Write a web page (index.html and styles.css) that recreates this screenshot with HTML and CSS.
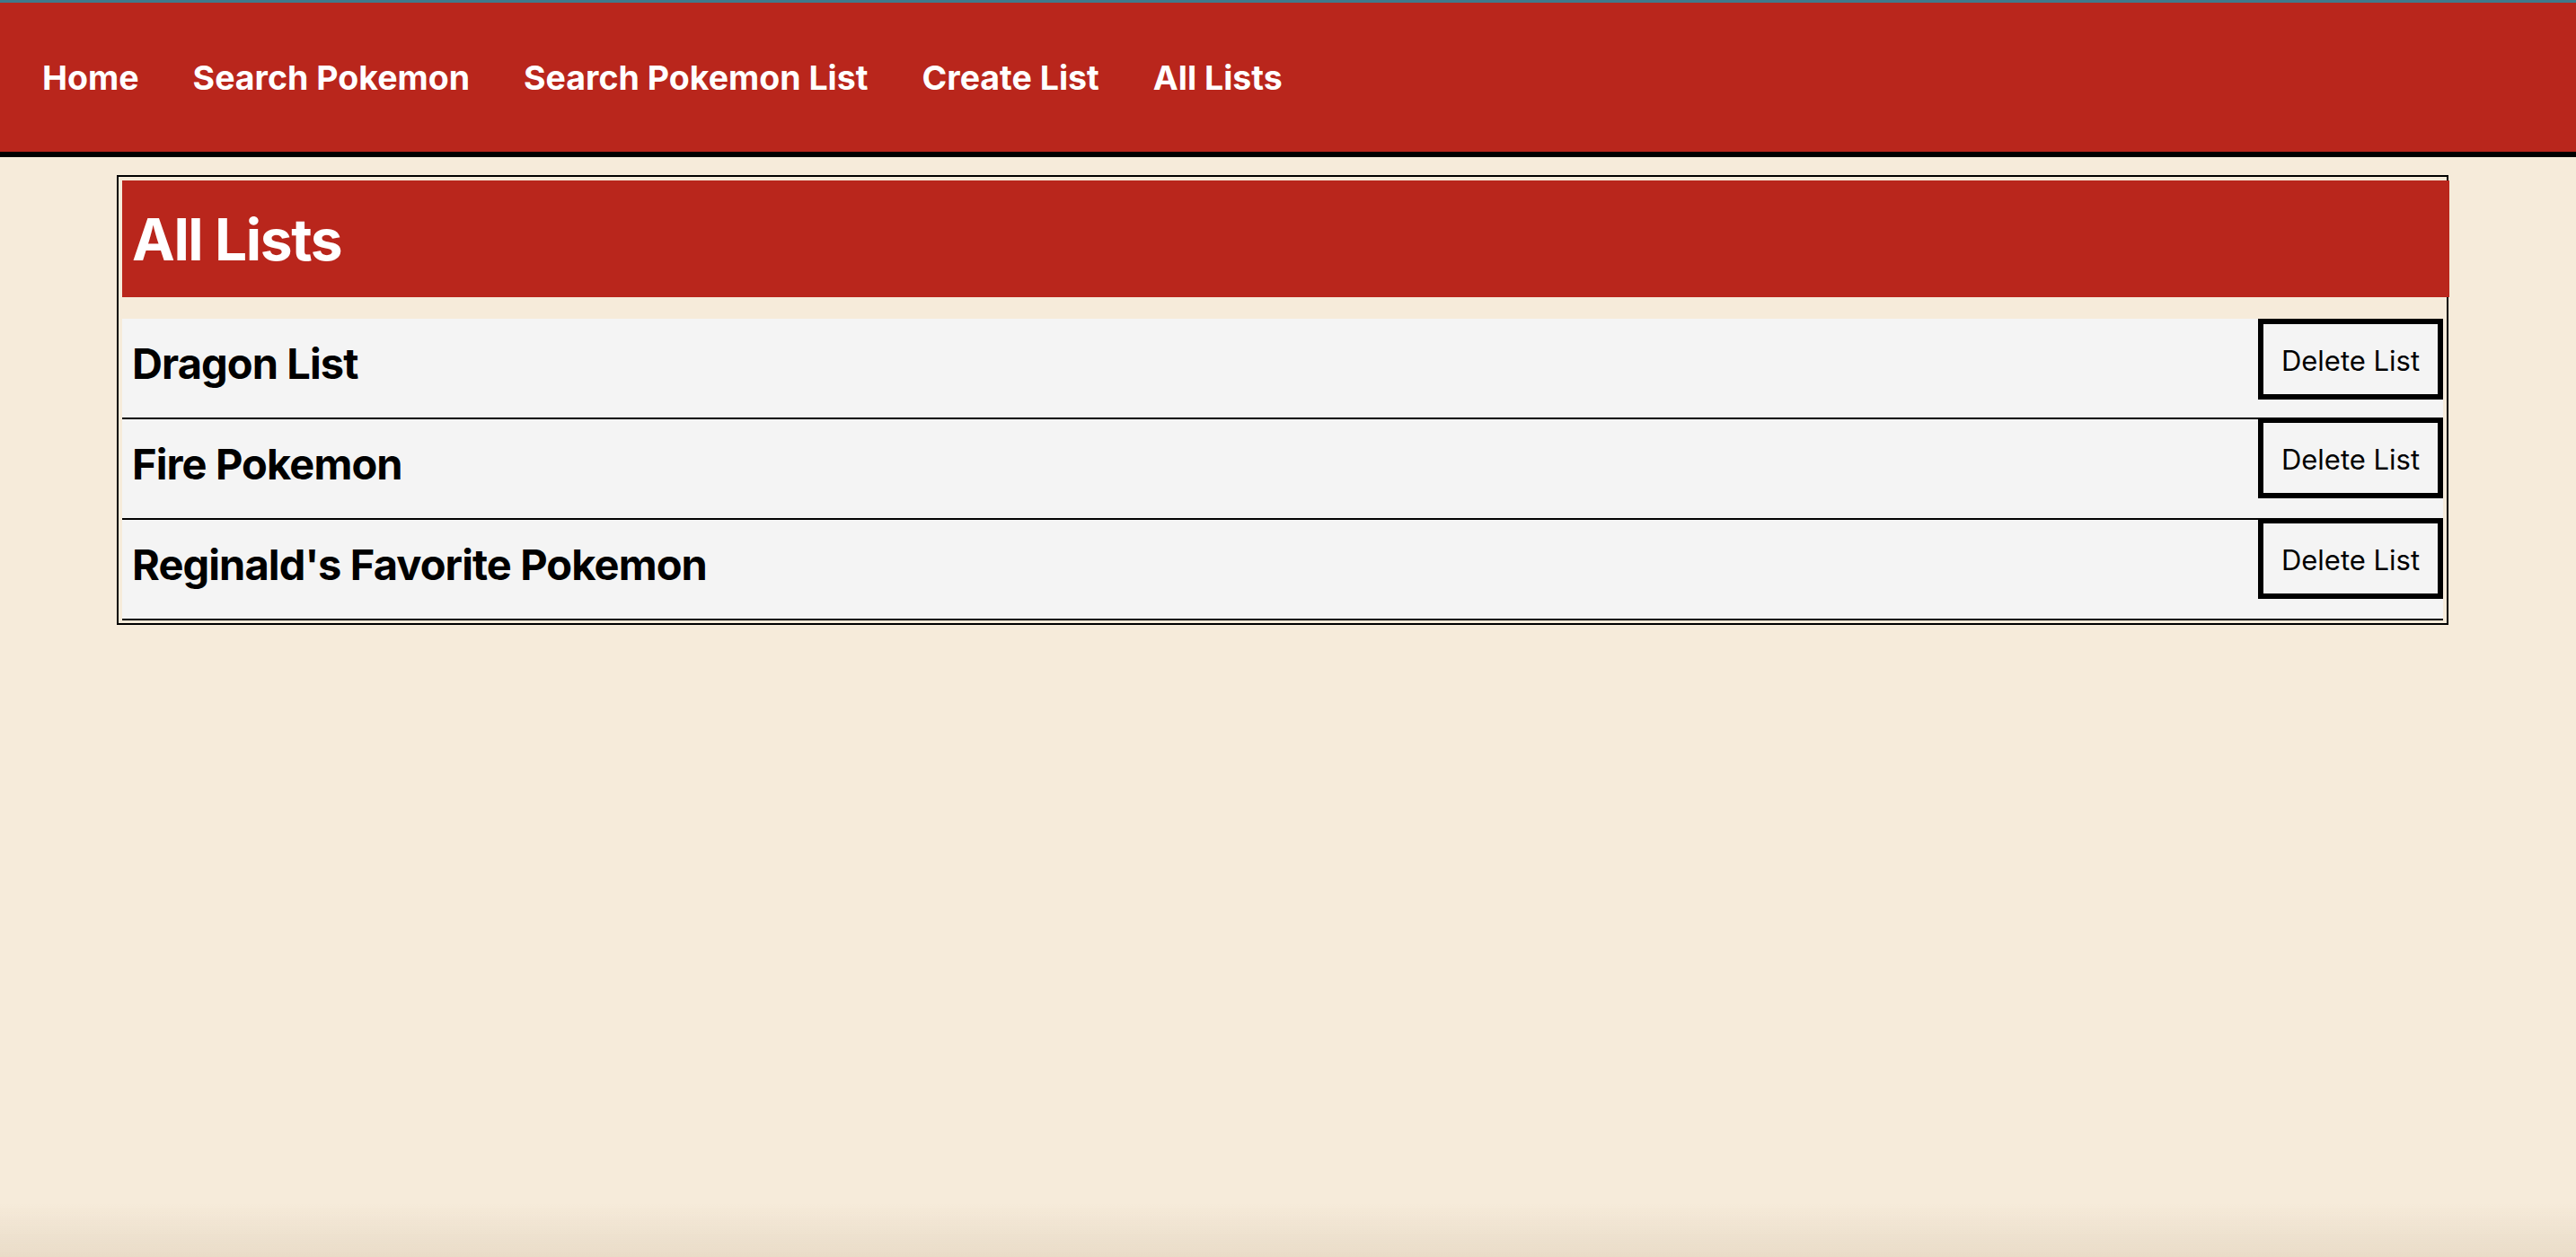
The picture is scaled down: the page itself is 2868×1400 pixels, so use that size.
FILE: index.html
```html
<!DOCTYPE html>
<html lang="en">
<head>
<meta charset="utf-8">
<title>All Lists</title>
<link rel="stylesheet" href="styles.css">
</head>
<body>
<nav class="nav">
  <a class="nav-link" href="#">Home</a>
  <a class="nav-link" href="#">Search Pokemon</a>
  <a class="nav-link" href="#">Search Pokemon List</a>
  <a class="nav-link" href="#">Create List</a>
  <a class="nav-link" href="#">All Lists</a>
</nav>
<main class="panel">
  <header class="panel-head"><h1 class="panel-title">All Lists</h1></header>
  <ul class="lists">
    <li class="row"><h2 class="row-title">Dragon List</h2><button class="btn">Delete List</button></li>
    <li class="row"><h2 class="row-title">Fire Pokemon</h2><button class="btn">Delete List</button></li>
    <li class="row"><h2 class="row-title">Reginald's Favorite Pokemon</h2><button class="btn">Delete List</button></li>
  </ul>
</main>
<div class="shade"></div>
</body>
</html>
```
FILE: styles.css
```css
html {
  background: #f6ebda;
}
body {
  margin: 0;
  min-height: 1400px;
  font-family: Inter, "Noto Sans", "Liberation Sans", sans-serif;
  color: #000;
}
.nav {
  display: flex;
  align-items: center;
  height: 166px;
  padding-left: 17px;
  background: #b9261c;
  border-top: 3px solid #3f7a8c;
  border-bottom: 6px solid #000;
}
.nav-link {
  padding: 0 30px;
  color: #fff;
  text-decoration: none;
  font-size: 37.5px;
  font-weight: 700;
  letter-spacing: 0;
}
.panel {
  margin: 20px 142px 0 130px;
  padding: 4px 4px 3px 4px;
  border: 2px solid #000;
}
.panel-head {
  display: flex;
  align-items: center;
  height: 130px;
  margin-right: -7px;
  padding-left: 11px;
  background: #b9261c;
}
.panel-title {
  margin: 0;
  color: #fff;
  font-size: 64px;
  font-weight: 700;
  letter-spacing: -1.4px;
}
.lists {
  list-style: none;
  margin: 24px 0 0 0;
  padding: 0;
}
.row {
  display: flex;
  align-items: flex-start;
  height: 110px;
  background: #f4f4f4;
  border-bottom: 2px solid #000;
}
.row-title {
  margin: 0;
  padding: 22px 0 0 11px;
  font-size: 47px;
  line-height: 56px;
  font-weight: 700;
  letter-spacing: -0.9px;
}
.btn {
  margin-left: auto;
  box-sizing: border-box;
  width: 206px;
  height: 90px;
  padding: 2px 0 0 0;
  background: #f4f4f4;
  border: 6px solid #000;
  font-family: Inter, "Noto Sans", "Liberation Sans", sans-serif;
  font-size: 31px;
  color: #000;
}
.row + .row .btn {
  margin-top: -2px;
}
.shade {
  position: fixed;
  left: 0;
  right: 0;
  bottom: 0;
  height: 60px;
  background: linear-gradient(to bottom, rgba(150, 120, 80, 0), rgba(150, 120, 80, 0.13));
  pointer-events: none;
}
```
